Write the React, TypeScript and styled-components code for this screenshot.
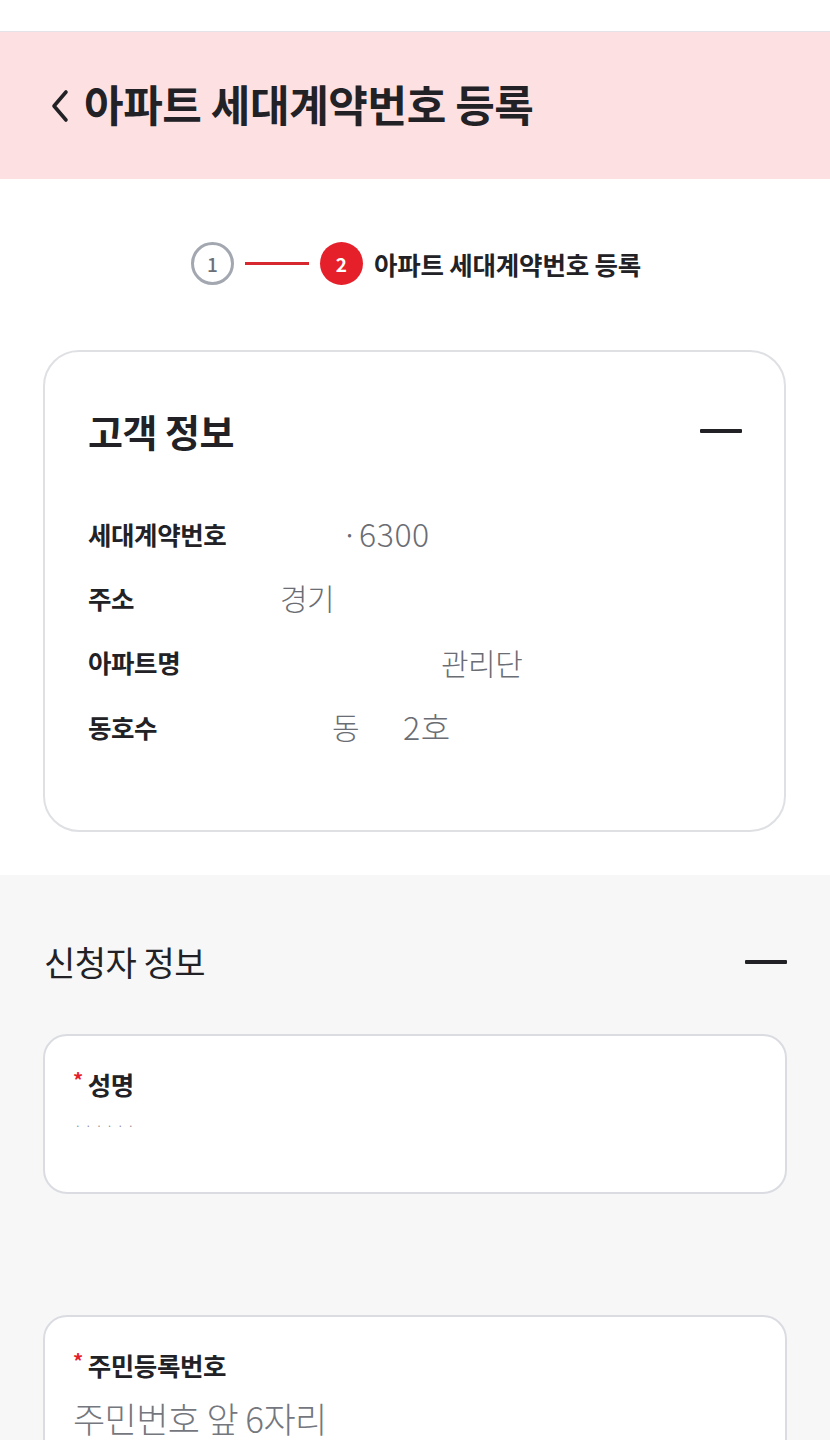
import React from "react";
import styled, { createGlobalStyle } from "styled-components";

const Global = createGlobalStyle`
  html, body { margin: 0; padding: 0; background: #ffffff; }
  body { font-family: "Noto Sans CJK KR", "Noto Sans", sans-serif; color: #222226; }
  * { box-sizing: border-box; }
`;

const Page = styled.div`
  width: 830px;
  height: 1440px;
  background: #ffffff;
  overflow: hidden;
`;

const TopStrip = styled.div`
  height: 32px;
  border-bottom: 1px solid #e4e4e8;
  background: #ffffff;
`;

const Header = styled.header`
  height: 147px;
  background: #fde1e2;
  display: flex;
  align-items: center;
  padding-left: 50px;
  padding-bottom: 4px;
  gap: 14px;
`;

const BackButton = styled.button`
  border: 0;
  background: transparent;
  padding: 0;
  display: flex;
  align-items: center;
  margin-top: 4px;
`;

const HeaderTitle = styled.h1`
  margin: 0;
  font-size: 43px;
  font-weight: 700;
  letter-spacing: -0.4px;
  color: #222226;
  line-height: 1;
`;

const Stepper = styled.div`
  display: flex;
  align-items: center;
  justify-content: center;
  padding-top: 63px;
  padding-left: 2px;
  height: 106px;
`;

const StepCircle = styled.div<{ $active?: boolean }>`
  width: 43px;
  height: 43px;
  border-radius: 50%;
  display: flex;
  align-items: center;
  justify-content: center;
  font-size: 19px;
  font-weight: ${(p) => (p.$active ? 700 : 500)};
  color: ${(p) => (p.$active ? "#ffffff" : "#6b6f78")};
  background: ${(p) => (p.$active ? "#e5202a" : "#ffffff")};
  border: ${(p) => (p.$active ? "none" : "3.5px solid #a3a7b0")};
`;

const StepLine = styled.div`
  width: 64px;
  height: 3px;
  background: #d7272f;
  margin: 0 11px;
`;

const StepLabel = styled.span`
  margin-left: 11px;
  font-size: 25.5px;
  font-weight: 700;
  color: #222226;
  letter-spacing: -0.2px;
`;

const InfoCard = styled.section`
  margin: 65px 44px 43px 43px;
  border: 2px solid #dfe0e4;
  border-radius: 36px;
  padding: 54px 42px 72px 43px;
  background: #ffffff;
`;

const CardHead = styled.div`
  display: flex;
  align-items: center;
  justify-content: space-between;
  height: 50px;
`;

const CardTitle = styled.h2<{ $light?: boolean }>`
  margin: 0;
  font-size: ${(p) => (p.$light ? "34px" : "38px")};
  font-weight: ${(p) => (p.$light ? 400 : 700)};
  letter-spacing: -0.5px;
  color: #222226;
  line-height: 50px;
`;

const Minus = styled.span`
  display: block;
  width: 42px;
  height: 4px;
  background: #222226;
  border-radius: 1px;
`;

const Rows = styled.div`
  margin-top: 45px;
  display: flex;
  flex-direction: column;
`;

const Row = styled.div`
  display: flex;
  align-items: center;
  height: 64.3px;
`;

const RowLabel = styled.span`
  width: 192px;
  flex: 0 0 192px;
  font-size: 25.5px;
  font-weight: 700;
  color: #222226;
  letter-spacing: -0.4px;
`;

const RowValue = styled.span<{ $indent: number; $digits?: boolean }>`
  margin-left: ${(p) => p.$indent}px;
  font-size: ${(p) => (p.$digits ? "32px" : "30px")};
  font-weight: 300;
  color: #6a6d73;
  letter-spacing: ${(p) => (p.$digits ? "0.6px" : "-0.5px")};
  line-height: 1;
`;

const GraySection = styled.section`
  background: #f7f7f8;
  padding: 63px 43px 0 43px;
  min-height: 564px;
`;

const SectionHead = styled(CardHead)`
  padding-left: 1px;
  height: 48px;
  margin-bottom: 48px;
`;

const FieldCard = styled.div<{ $tall?: boolean }>`
  background: #ffffff;
  border: 2px solid #dadce1;
  border-radius: 24px;
  padding: 31px 30px 0 28px;
  height: ${(p) => (p.$tall ? "200px" : "160px")};
  margin-bottom: 121px;
`;

const FieldLabel = styled.div`
  display: flex;
  align-items: flex-start;
  font-size: 25.5px;
  font-weight: 700;
  color: #222226;
  line-height: 34px;
  letter-spacing: -0.4px;
`;

const Required = styled.span`
  color: #e5202a;
  font-size: 20px;
  line-height: 20px;
  margin-right: 5px;
  margin-top: 3px;
`;

const MaskedValue = styled.div`
  margin-top: 20px;
  font-size: 10px;
  color: #8a8d93;
  letter-spacing: 5px;
  line-height: 10px;
  padding-left: 2px;
`;

const Placeholder = styled.div`
  margin-top: 15px;
  font-size: 35px;
  font-weight: 300;
  color: #74777d;
  letter-spacing: -0.6px;
  line-height: 42px;
`;

const Chevron = () => (
  <svg width="20" height="34" viewBox="0 0 20 34" fill="none">
    <polyline
      points="16,3 4,17 16,31"
      stroke="#222226"
      strokeWidth="3.6"
      strokeLinecap="round"
      strokeLinejoin="round"
    />
  </svg>
);

export default function App() {
  return (
    <Page>
      <Global />
      <TopStrip />
      <Header>
        <BackButton aria-label="뒤로">
          <Chevron />
        </BackButton>
        <HeaderTitle>아파트 세대계약번호 등록</HeaderTitle>
      </Header>

      <Stepper>
        <StepCircle>1</StepCircle>
        <StepLine />
        <StepCircle $active>2</StepCircle>
        <StepLabel>아파트 세대계약번호 등록</StepLabel>
      </Stepper>

      <InfoCard>
        <CardHead>
          <CardTitle>고객 정보</CardTitle>
          <Minus />
        </CardHead>
        <Rows>
          <Row>
            <RowLabel>세대계약번호</RowLabel>
            <RowValue $indent={61} $digits>·6300</RowValue>
          </Row>
          <Row>
            <RowLabel>주소</RowLabel>
            <RowValue $indent={0}>경기</RowValue>
          </Row>
          <Row>
            <RowLabel>아파트명</RowLabel>
            <RowValue $indent={161}>관리단</RowValue>
          </Row>
          <Row>
            <RowLabel>동호수</RowLabel>
            <RowValue $indent={52}>동</RowValue>
            <RowValue $indent={44} $digits>2호</RowValue>
          </Row>
        </Rows>
      </InfoCard>

      <GraySection>
        <SectionHead>
          <CardTitle $light>신청자 정보</CardTitle>
          <Minus />
        </SectionHead>
        <FieldCard>
          <FieldLabel>
            <Required>*</Required>성명
          </FieldLabel>
          <MaskedValue>······</MaskedValue>
        </FieldCard>
        <FieldCard $tall>
          <FieldLabel>
            <Required>*</Required>주민등록번호
          </FieldLabel>
          <Placeholder>주민번호 앞 6자리</Placeholder>
        </FieldCard>
      </GraySection>
    </Page>
  );
}
